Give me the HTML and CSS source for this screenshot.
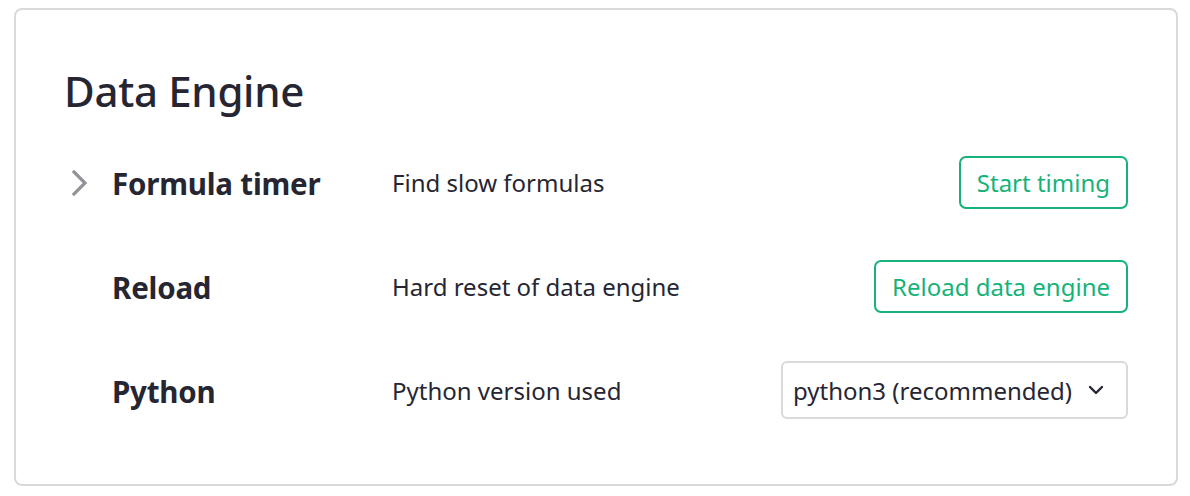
FILE: index.html
```html
<!DOCTYPE html>
<html>
<head>
<meta charset="utf-8">
<link rel="stylesheet" href="styles.css">
</head>
<body>
<div class="page">
  <section class="card">
    <h1 class="title">Data Engine</h1>
    <div class="rows">
      <div class="row">
        <div class="expander">
          <svg width="18" height="26" viewBox="0 0 18 26"><path d="M3 2 L14 13 L3 24" fill="none" stroke="#929299" stroke-width="3.2" stroke-linecap="square"/></svg>
        </div>
        <div class="label">Formula timer</div>
        <div class="desc">Find slow formulas</div>
        <div class="control"><button class="btn">Start timing</button></div>
      </div>
      <div class="row">
        <div class="expander"></div>
        <div class="label">Reload</div>
        <div class="desc">Hard reset of data engine</div>
        <div class="control"><button class="btn">Reload data engine</button></div>
      </div>
      <div class="row">
        <div class="expander"></div>
        <div class="label">Python</div>
        <div class="desc">Python version used</div>
        <div class="control">
          <div class="select">
            <span class="select-text">python3 (recommended)</span>
            <svg class="caret" width="16" height="10" viewBox="0 0 16 10"><path d="M2 2 L8 8 L14 2" fill="none" stroke="#262633" stroke-width="2.4" stroke-linecap="round" stroke-linejoin="round"/></svg>
          </div>
        </div>
      </div>
    </div>
  </section>
</div>
</body>
</html>
```

FILE: styles.css
```css
html, body {
  margin: 0;
  padding: 0;
  background: #ffffff;
}

body {
  font-family: "Noto Sans", "Open Sans", sans-serif;
  color: #262633;
}

.page {
  padding: 8px 12px 0 14px;
}

.card {
  box-sizing: border-box;
  height: 478px;
  border: 2px solid #d9d9d9;
  border-radius: 8px;
  padding: 55px 48px 0 48px;
}

.title {
  margin: 0 0 36px 0;
  font-size: 42px;
  line-height: 52px;
  font-weight: 500;
  letter-spacing: -0.3px;
}

.rows {
  display: flex;
  flex-direction: column;
  gap: 46px;
}

.row {
  display: grid;
  grid-template-columns: 48px 280px 1fr auto;
  align-items: center;
  min-height: 58px;
}

.expander {
  display: flex;
  align-items: center;
  padding-left: 7px;
  padding-top: 2px;
}

.label {
  font-size: 29.5px;
  font-weight: 700;
  line-height: 38px;
  letter-spacing: -0.2px;
  padding-top: 3px;
}

.desc {
  font-size: 24px;
  line-height: 32px;
  padding-top: 2px;
}

.control {
  display: flex;
  justify-content: flex-end;
}

.btn {
  box-sizing: border-box;
  height: 53px;
  padding: 0 16px;
  border: 2px solid #16b378;
  border-radius: 7px;
  background: #ffffff;
  color: #16b378;
  font-family: "Noto Sans", "Open Sans", sans-serif;
  font-size: 24px;
}

.select {
  box-sizing: border-box;
  width: 347px;
  height: 58px;
  border: 2px solid #d9d9d9;
  border-radius: 6px;
  display: flex;
  align-items: center;
  padding: 0 22px 0 10px;
  gap: 10px;
}

.select-text {
  font-size: 24px;
  white-space: nowrap;
  flex: 1;
}

.caret {
  flex: none;
}
```
